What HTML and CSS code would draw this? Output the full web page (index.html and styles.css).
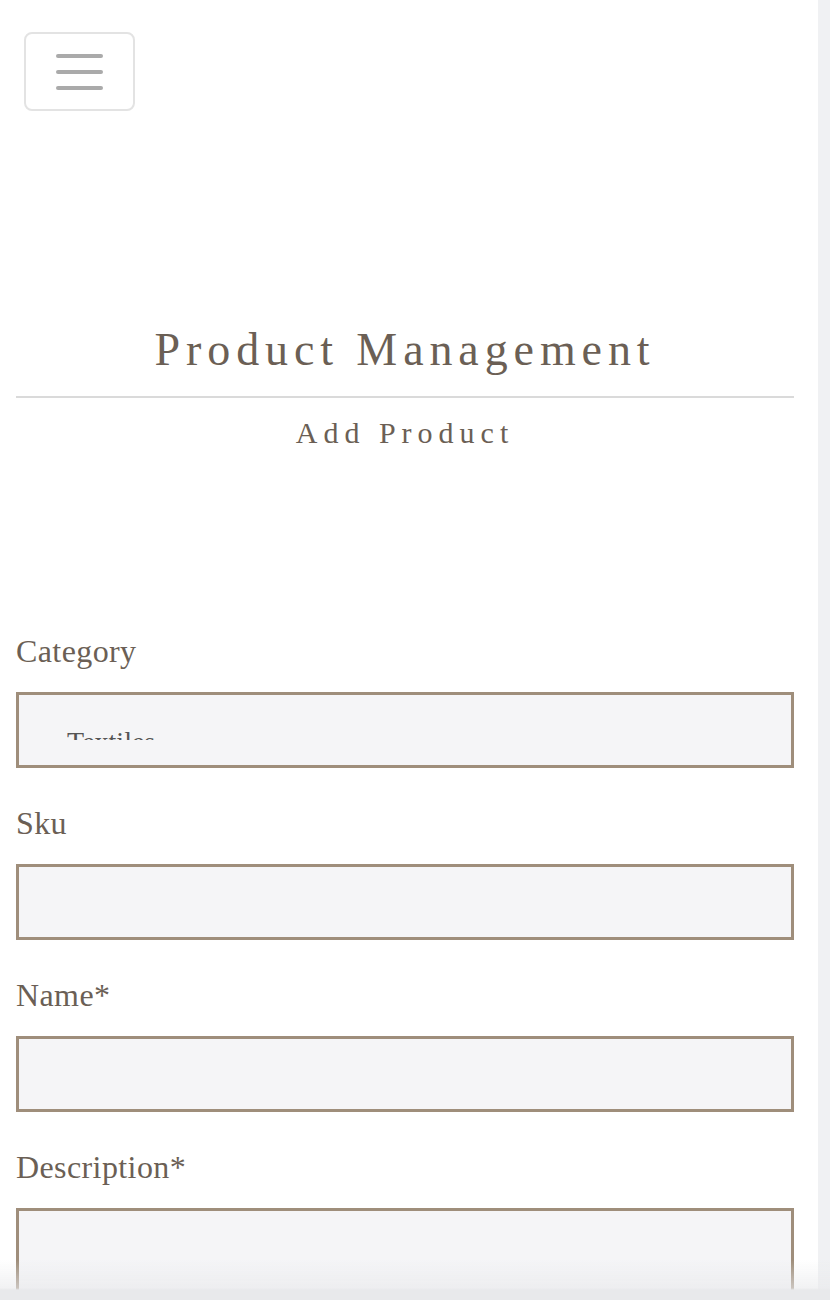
FILE: index.html
```html
<!DOCTYPE html>
<html lang="en">
<head>
<meta charset="utf-8">
<title>Product Management</title>
<link rel="stylesheet" href="styles.css">
</head>
<body>
<div class="layout">
  <div class="main">
    <nav class="navbar">
      <button class="toggler" type="button" aria-label="Toggle navigation">
        <svg width="47" height="38" viewBox="0 0 47 38" aria-hidden="true">
          <g stroke="#aaaaaa" stroke-width="4" stroke-linecap="round">
            <line x1="2" y1="3" x2="45" y2="3"/>
            <line x1="2" y1="19" x2="45" y2="19"/>
            <line x1="2" y1="35" x2="45" y2="35"/>
          </g>
        </svg>
      </button>
    </nav>
    <header class="heading">
      <h1 class="title">Product Management</h1>
      <div class="rule"></div>
      <h2 class="subtitle">Add Product</h2>
    </header>
    <form class="form">
      <div class="field">
        <label class="label">Category</label>
        <div class="box select">
          <div class="select-clip"><span class="select-text">Textiles</span></div>
        </div>
      </div>
      <div class="field">
        <label class="label">Sku</label>
        <div class="box"></div>
      </div>
      <div class="field">
        <label class="label">Name*</label>
        <div class="box"></div>
      </div>
      <div class="field">
        <label class="label">Description*</label>
        <div class="box textarea"></div>
      </div>
    </form>
  </div>
  <div class="track"></div>
</div>
<div class="bottom-shade"></div>
</body>
</html>
```

FILE: styles.css
```css
html, body {
  margin: 0;
  padding: 0;
  background: #ffffff;
}

body {
  font-family: "Liberation Serif", "Times New Roman", serif;
  color: #6b5f55;
}

.layout {
  display: flex;
  min-height: 1300px;
}

.main {
  width: 818px;
  box-sizing: border-box;
  padding: 0 24px 0 16px;
}

.track {
  width: 12px;
  flex: none;
  background: #f0f1f3;
}

.navbar {
  padding-top: 32px;
}

.toggler {
  display: flex;
  align-items: center;
  justify-content: center;
  margin-left: 8px;
  width: 111px;
  height: 79px;
  padding: 0;
  background: #ffffff;
  border: 2px solid #e3e3e3;
  border-radius: 8px;
  box-sizing: border-box;
}

.heading {
  text-align: center;
}

.title {
  margin: 211px 0 0;
  font-size: 46px;
  line-height: 55px;
  font-weight: normal;
  letter-spacing: 5.9px;
  color: #6b5f55;
}

.rule {
  margin-top: 19px;
  height: 2px;
  background: #dadada;
}

.subtitle {
  margin: 17px 0 0;
  font-size: 30px;
  line-height: 36px;
  font-weight: normal;
  letter-spacing: 6px;
  color: #6b5f55;
}

.form {
  margin-top: 181px;
  display: flex;
  flex-direction: column;
  gap: 36px;
}

.field {
  display: flex;
  flex-direction: column;
  gap: 22px;
}

.label {
  font-size: 32px;
  line-height: 38px;
  letter-spacing: 0.4px;
  color: #6b5f55;
}

.box {
  height: 76px;
  box-sizing: border-box;
  border: 3px solid #9f8e7b;
  background: #f5f5f7;
}

.select-clip {
  height: 45px;
  overflow: hidden;
  box-sizing: border-box;
  padding: 33px 0 0 48px;
}

.select-text {
  display: block;
  font-size: 28px;
  line-height: 28px;
  color: #555555;
}

.textarea {
  height: 160px;
}

.bottom-shade {
  position: fixed;
  left: 0;
  right: 0;
  bottom: 0;
  height: 40px;
  background: linear-gradient(to bottom, rgba(232, 233, 235, 0) 0, rgba(232, 233, 235, 0.6) 28px, #e8e9eb 30px, #e8e9eb 40px);
  pointer-events: none;
}
```
